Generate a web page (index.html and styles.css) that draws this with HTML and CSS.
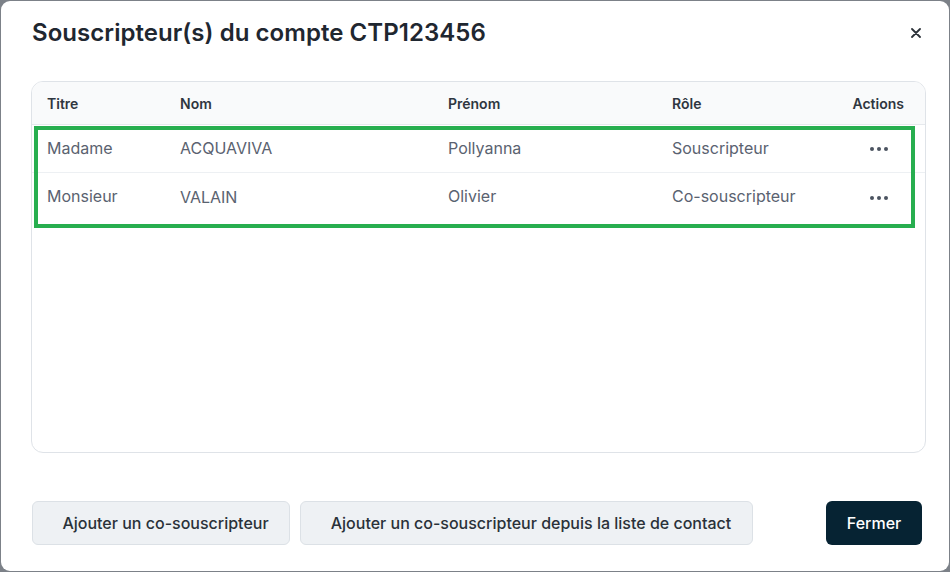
FILE: index.html
```html
<!DOCTYPE html>
<html lang="fr">
<head>
<meta charset="utf-8">
<title>Souscripteur(s)</title>
<link rel="stylesheet" href="styles.css">
</head>
<body>
<div class="backdrop">
  <div class="modal">
    <div class="modal-header">
      <h1 class="modal-title">Souscripteur(s) du compte CTP123456</h1>
      <button class="close" aria-label="Fermer">
        <svg width="10" height="10" viewBox="0 0 10 10"><path d="M1 1L9 9M9 1L1 9" stroke="#2b3138" stroke-width="1.8" stroke-linecap="round"/></svg>
      </button>
    </div>
    <div class="table-wrap">
      <div class="row head">
        <div class="c c-titre">Titre</div>
        <div class="c c-nom">Nom</div>
        <div class="c c-prenom">Prénom</div>
        <div class="c c-role">Rôle</div>
        <div class="c c-actions">Actions</div>
      </div>
      <div class="row body">
        <div class="c c-titre">Madame</div>
        <div class="c c-nom">ACQUAVIVA</div>
        <div class="c c-prenom">Pollyanna</div>
        <div class="c c-role">Souscripteur</div>
        <div class="c c-actions"><span class="dots"><i></i><i></i><i></i></span></div>
      </div>
      <div class="row body">
        <div class="c c-titre">Monsieur</div>
        <div class="c c-nom nom-low">VALAIN</div>
        <div class="c c-prenom">Olivier</div>
        <div class="c c-role">Co-souscripteur</div>
        <div class="c c-actions"><span class="dots"><i></i><i></i><i></i></span></div>
      </div>
      <div class="highlight"></div>
    </div>
    <div class="footer">
      <div class="footer-left">
        <button class="btn btn-light btn-a">Ajouter un co-souscripteur</button>
        <button class="btn btn-light btn-b">Ajouter un co-souscripteur depuis la liste de contact</button>
      </div>
      <button class="btn btn-dark">Fermer</button>
    </div>
  </div>
</div>
</body>
</html>
```

FILE: styles.css
```css
* { box-sizing: border-box; }
html, body { margin: 0; padding: 0; }
body {
  width: 950px;
  height: 572px;
  overflow: hidden;
  background: #7c8188;
  font-family: Inter, "Noto Sans", sans-serif;
}
.backdrop {
  padding: 1px 0 0 1px;
  height: 572px;
}
.modal {
  width: 948px;
  height: 570px;
  background: #ffffff;
  border-radius: 9px;
  padding: 16px 23px 0 30px;
  display: flex;
  flex-direction: column;
}
.modal-header {
  display: flex;
  align-items: center;
  justify-content: space-between;
  height: 32px;
}
.modal-title {
  margin: 0;
  font-size: 24px;
  line-height: 32px;
  font-weight: 600;
  color: #1f2730;
  letter-spacing: 0.05px;
  padding-left: 1px;
}
.close {
  border: 0;
  background: none;
  padding: 0;
  width: 10px;
  height: 10px;
  margin-right: 5px;
  margin-top: 0;
  display: flex;
}
.table-wrap {
  position: relative;
  margin-top: 32px;
  height: 372px;
  border: 1px solid #dfe3e8;
  border-radius: 12px;
  overflow: hidden;
}
.row {
  display: flex;
  align-items: center;
  padding: 0 21px 0 15px;
}
.row.head {
  height: 43px;
  background: #f9fafb;
  border-bottom: 1px solid #e6e9ed;
  font-size: 14px;
  font-weight: 600;
  color: #2f3640;
}
.row.body {
  height: 48px;
  border-bottom: 1px solid #edf0f3;
  font-size: 16px;
  color: #5a6270;
  padding-bottom: 2px;
}
.row.body + .row.body { border-bottom: 0; }
.c { white-space: nowrap; }
.c-titre { width: 133px; }
.c-nom { width: 268px; }
.c-prenom { width: 224px; }
.c-role { flex: 1; }
.c-actions { width: 60px; text-align: right; }
.nom-low { padding-top: 1px; }
.dots {
  display: inline-flex;
  gap: 3px;
  margin-right: 16px;
  vertical-align: middle;
}
.dots i {
  width: 4px;
  height: 4px;
  border-radius: 50%;
  background: #4b5360;
  display: block;
}
.highlight {
  position: absolute;
  left: 2px;
  top: 44px;
  width: 881px;
  height: 102px;
  border: 4px solid #27ae4f;
  pointer-events: none;
}
.footer {
  margin-top: 48px;
  display: flex;
  justify-content: space-between;
  align-items: center;
  padding-left: 1px;
  padding-right: 4px;
}
.footer-left { display: flex; gap: 10px; }
.btn {
  height: 44px;
  border-radius: 6px;
  font-family: Inter, "Noto Sans", sans-serif;
  font-size: 16px;
  font-weight: 500;
  cursor: pointer;
}
.btn-light {
  background: #eef1f4;
  border: 1px solid #dce1e6;
  color: #2a3139;
  padding: 0 0 0 9px;
}
.btn-a { width: 258px; }
.btn-b { width: 453px; }
.btn-dark {
  width: 96px;
  background: #062333;
  border: 0;
  color: #ffffff;
}
```
